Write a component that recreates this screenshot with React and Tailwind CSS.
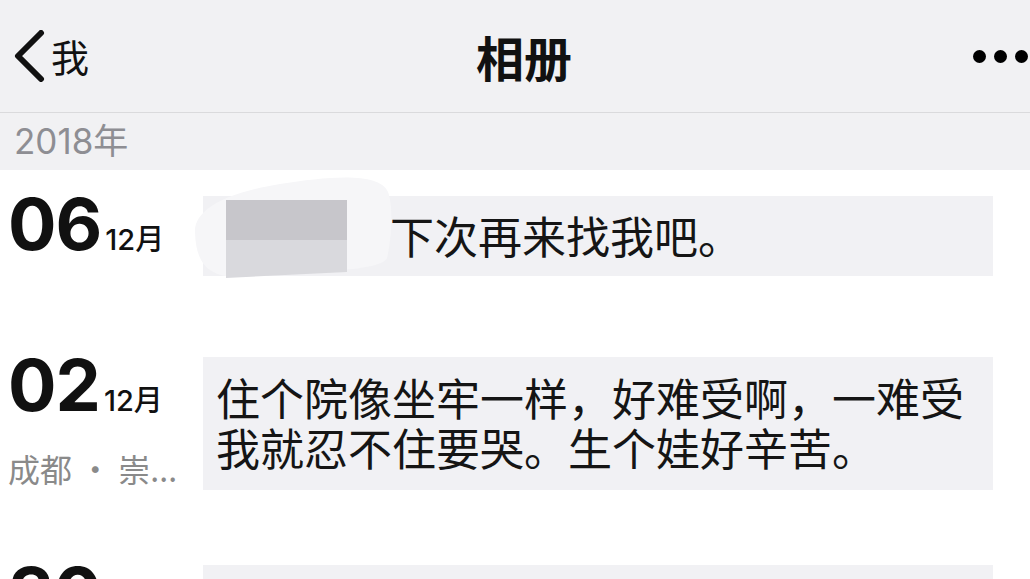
import React from 'react'

const CJK = "font-['Noto_Sans_CJK_SC',sans-serif]"
const NUM = "font-['Inter','Noto_Sans_CJK_SC',sans-serif]"

function Redacted() {
  // smudged-out thumbnail that sits over the left of the first card
  return (
    <svg
      className="absolute left-[-13px] top-[-24px]"
      width="205"
      height="110"
      viewBox="0 0 205 110"
    >
      <path
        d="M5,60 C4,36 40,20 90,12 C140,4 190,0 198,20 C204,36 201,70 197,86 C190,100 120,99 60,104 C22,108 6,96 5,60 Z"
        fill="#f6f6f8"
      />
      <rect x="36" y="28" width="121" height="40" fill="#c7c6cb" />
      <polygon points="36,68 157,68 157,100 36,106" fill="#d9d9dd" />
    </svg>
  )
}

function DateCol({ day, month, place }) {
  return (
    <div className="w-[195px] shrink-0">
      <div className="flex items-baseline">
        <span className={`${NUM} text-[72px] leading-[56px] font-bold tracking-[-1px] text-[#111]`}>{day}</span>
        <span className={`${NUM} text-[29px] font-medium ml-[4px] text-[#111]`}>{month}</span>
      </div>
      {place && (
        <p className={`${CJK} text-[32px] leading-[40px] mt-[25px] text-[#8a8a8a]`}>{place}</p>
      )}
    </div>
  )
}

export default function App() {
  return (
    <div className={`w-[1030px] h-[579px] overflow-hidden bg-white ${CJK}`}>
      {/* nav bar */}
      <div className="h-[113px] bg-[#f1f1f3] border-b border-[#dadadc] flex items-center">
        <div className="w-[200px] flex items-center pl-[13px]">
          <svg width="32" height="52" viewBox="0 0 32 52">
            <polyline
              points="28,3 5,26 28,49"
              fill="none"
              stroke="#111"
              strokeWidth="6"
              strokeLinecap="round"
              strokeLinejoin="round"
            />
          </svg>
          <span className="text-[38px] ml-[6px] text-[#111] leading-none">我</span>
        </div>
        <div className="flex-1 text-center pl-[18px] text-[48px] font-bold text-[#111] leading-none">相册</div>
        <div className="w-[200px] flex justify-end items-center gap-[8px] pr-[2px]">
          <span className="w-[13px] h-[13px] rounded-full bg-black" />
          <span className="w-[13px] h-[13px] rounded-full bg-black" />
          <span className="w-[13px] h-[13px] rounded-full bg-black" />
        </div>
      </div>

      {/* year header */}
      <div className={`h-[57px] bg-[#f1f1f3] flex items-center pl-[14px] text-[35px] text-[#8e8e93] ${NUM}`}>
        2018年
      </div>

      {/* posts */}
      <div className="pt-[26px] pl-[8px] pr-[37px]">
        <div className="flex items-start mb-[81px]">
          <DateCol day="06" month="12月" />
          <div className="flex-1 h-[80px] bg-[#f1f1f4] flex items-center">
            <div className="w-[187px] self-stretch relative shrink-0">
              <Redacted />
            </div>
            <p className="text-[44px] leading-none text-[#151515] -mt-[2px]">下次再来找我吧。</p>
          </div>
        </div>

        <div className="flex items-start mb-[75px]">
          <DateCol day="02" month="12月" place="成都 · 崇..." />
          <div className="flex-1 bg-[#f1f1f4] pl-[13px] pr-[8px] pt-[15px] pb-[18px]">
            <p className="text-[44px] leading-[50px] text-[#151515]">
              住个院像坐牢一样，好难受啊，一难受我就忍不住要哭。生个娃好辛苦。
            </p>
          </div>
        </div>

        <div className="flex items-start">
          <DateCol day="30" month="11月" />
          <div className="flex-1 h-[90px] bg-[#f1f1f4]" />
        </div>
      </div>
    </div>
  )
}
